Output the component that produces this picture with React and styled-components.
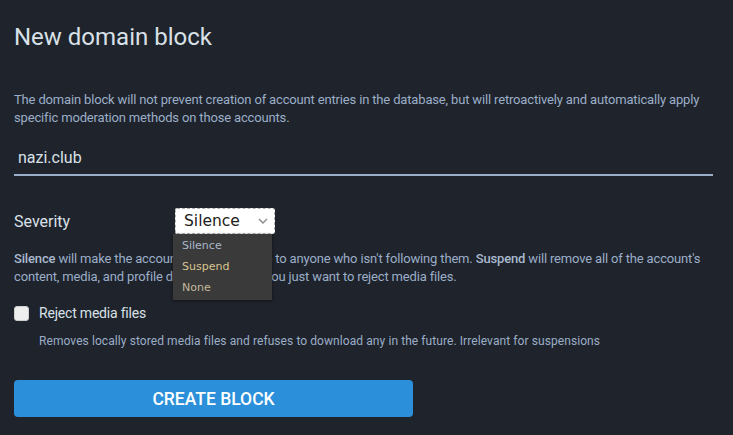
import React from "react";
import styled, { createGlobalStyle } from "styled-components";

const Global = createGlobalStyle`
  html, body {
    margin: 0;
    padding: 0;
    background: #1f232b;
  }
  body {
    font-family: Roboto, "Noto Sans", sans-serif;
    -webkit-font-smoothing: antialiased;
  }
`;

const Page = styled.div`
  width: 699px;
  padding: 19px 20px 18px 14px;
  color: #d9e1e8;
`;

const Title = styled.h2`
  margin: 0 0 36px;
  font-size: 24px;
  font-weight: 400;
  line-height: 36px;
  color: #d9e1e8;
`;

const Hint = styled.p`
  margin: ${(p) => p.$margin || "0"};
  font-size: ${(p) => p.$size || 13}px;
  letter-spacing: ${(p) => p.$spacing || "-0.16px"};
  line-height: 18px;
  color: #9baec8;

  strong {
    font-weight: 500;
    color: #a9b9cf;
  }
`;

const TextInput = styled.div`
  margin-top: 20px;
  padding: 0 4px 5px;
  font-size: 16px;
  line-height: 22px;
  color: #d9e1e8;
  border-bottom: 2px solid #9baec8;
`;

const SelectRow = styled.div`
  display: flex;
  align-items: center;
  margin-top: 32px;
  height: 26px;
`;

const Label = styled.label`
  width: 161px;
  font-size: 16px;
  color: #d9e1e8;
`;

const SelectWrap = styled.div`
  position: relative;
`;

const SelectBox = styled.div`
  box-sizing: border-box;
  width: 100px;
  height: 26px;
  display: flex;
  align-items: center;
  justify-content: space-between;
  padding: 0 6px 0 8px;
  background: #ffffff;
  border: 1px dashed #b0b0b0;
  border-radius: 2px;
  font-family: "DejaVu Sans", sans-serif;
  font-size: 15.5px;
  color: #202020;
`;

const Menu = styled.ul`
  position: absolute;
  top: 26px;
  left: -2px;
  width: 99px;
  margin: 0;
  padding: 1px 0 2px;
  list-style: none;
  background: #3a3a3a;
  box-shadow: 0 1px 3px rgba(0, 0, 0, 0.5);
  z-index: 2;
`;

const MenuItem = styled.li`
  padding: 0 9px;
  height: 21px;
  line-height: 21px;
  font-family: "DejaVu Sans", sans-serif;
  font-size: 11px;
  color: ${(p) => p.$color};
`;

const CheckRow = styled.div`
  display: flex;
  align-items: center;
  margin-top: 19px;
`;

const Box = styled.span`
  width: 13px;
  height: 13px;
  margin-right: 10px;
  border-radius: 3px;
  background: #eeeeee;
  border: 1px solid #cfcfcf;
`;

const CheckLabel = styled.span`
  font-size: 14px;
  color: #d9e1e8;
  letter-spacing: -0.2px;
`;

const Button = styled.button`
  display: block;
  width: 399px;
  height: 37px;
  margin-top: 30px;
  border: 0;
  border-radius: 4px;
  background: #2b90d9;
  color: #ffffff;
  font-family: Roboto, sans-serif;
  font-size: 17.5px;
  font-weight: 500;
  text-transform: uppercase;
`;

const Chevron = () => (
  <svg width="10" height="6" viewBox="0 0 10 6" fill="none">
    <path d="M1 1l4 4 4-4" stroke="#8a8a8a" strokeWidth="1.4" />
  </svg>
);

export default function App() {
  return (
    <Page>
      <Global />
      <Title>New domain block</Title>
      <Hint>
        The domain block will not prevent creation of account entries in the
        database, but will retroactively and automatically apply specific
        moderation methods on those accounts.
      </Hint>
      <TextInput>nazi.club</TextInput>
      <SelectRow>
        <Label>Severity</Label>
        <SelectWrap>
          <SelectBox>
            Silence
            <Chevron />
          </SelectBox>
          <Menu>
            <MenuItem $color="#a9b7c9">Silence</MenuItem>
            <MenuItem $color="#d8c58e">Suspend</MenuItem>
            <MenuItem $color="#c3b79a">None</MenuItem>
          </Menu>
        </SelectWrap>
      </SelectRow>
      <Hint $margin="16px 0 0">
        <strong>Silence</strong> will make the account's posts invisible to
        anyone who isn't following them. <strong>Suspend</strong> will remove
        all of the account's content, media, and profile data. Use{" "}
        <strong>None</strong> if you just want to reject media files.
      </Hint>
      <CheckRow>
        <Box />
        <CheckLabel>Reject media files</CheckLabel>
      </CheckRow>
      <Hint $size={12} $spacing="0.08px" $margin="11px 0 0 25px">
        Removes locally stored media files and refuses to download any in the
        future. Irrelevant for suspensions
      </Hint>
      <Button>Create block</Button>
    </Page>
  );
}
